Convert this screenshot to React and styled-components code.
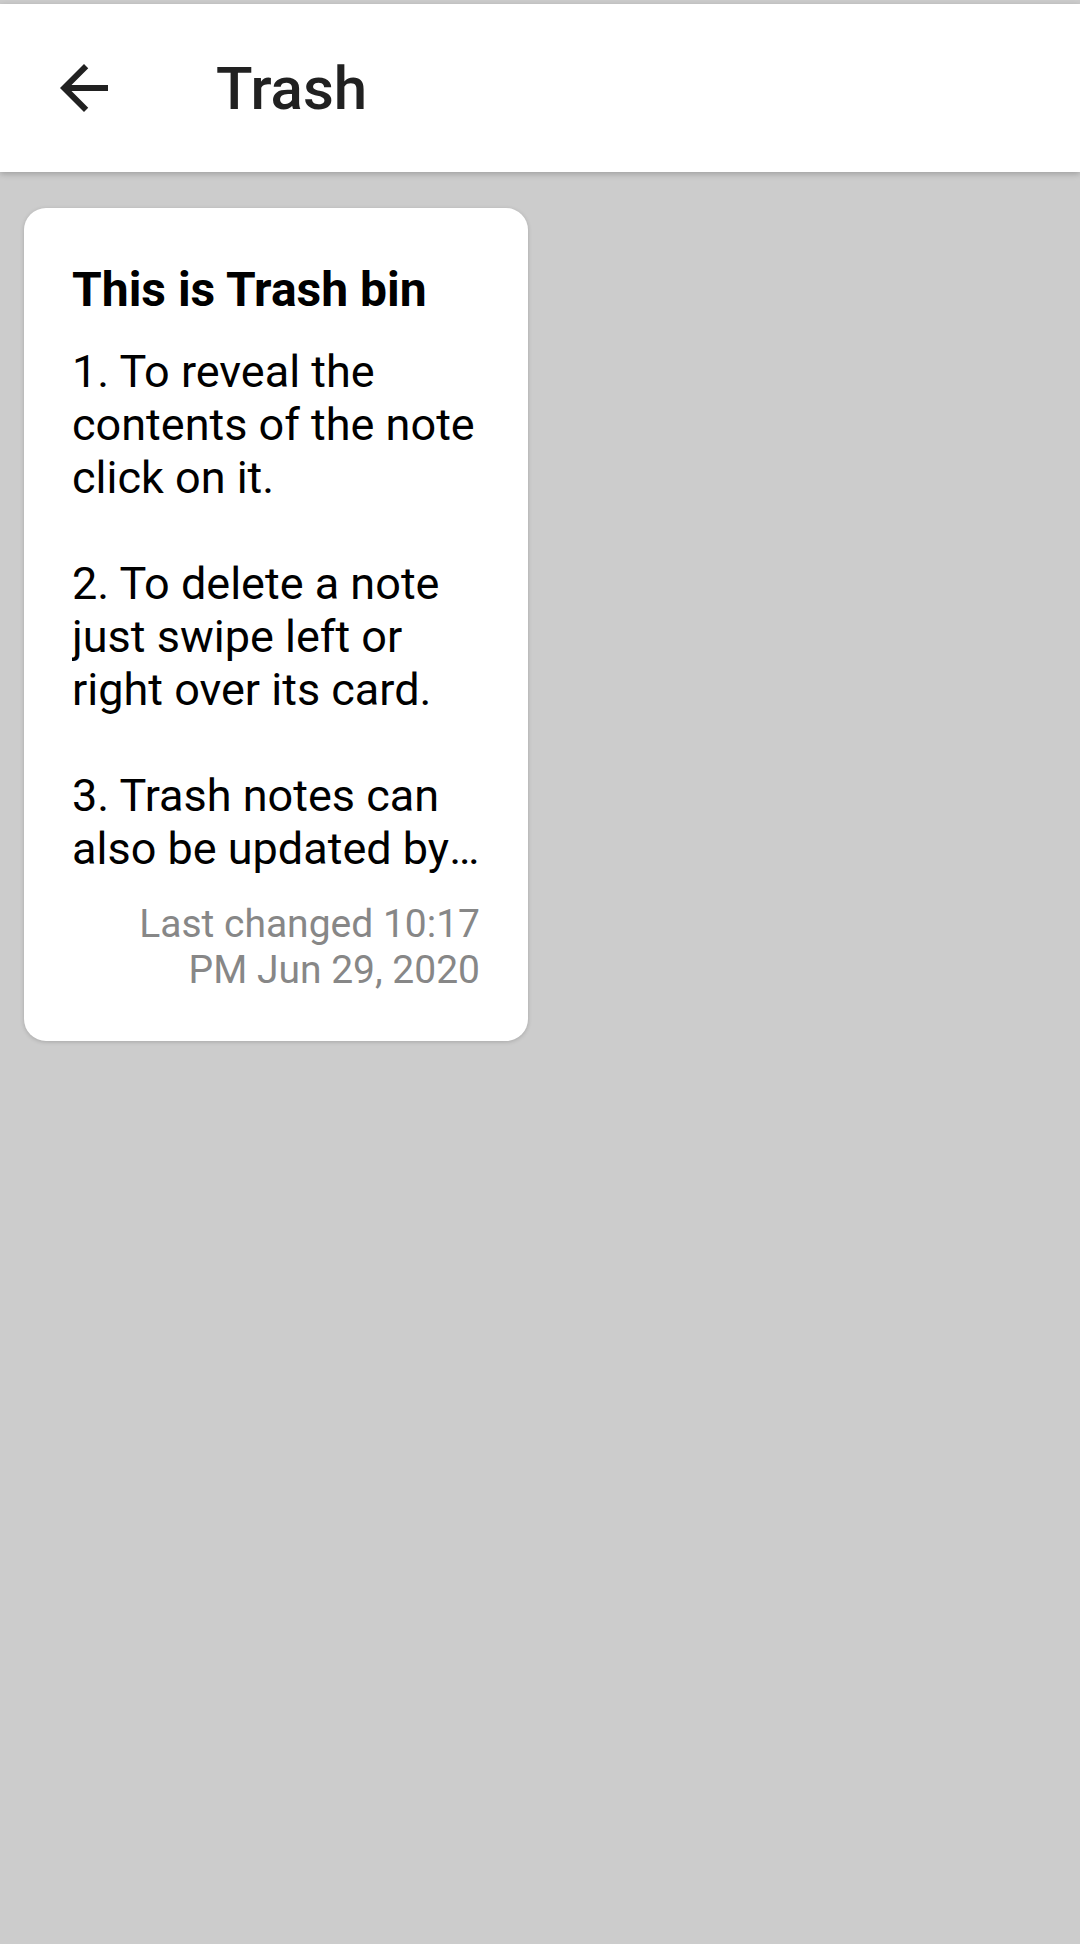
import styled, { createGlobalStyle } from "styled-components";

const GlobalStyle = createGlobalStyle`
  html, body {
    margin: 0;
    padding: 0;
    background: #cccccc;
  }
  body {
    font-family: Roboto, "Noto Sans", "Liberation Sans", sans-serif;
  }
`;

const notes = [
  {
    id: 1,
    title: "This is Trash bin",
    body:
      "1. To reveal the contents of the note click on it.\n\n2. To delete a note just swipe left or right over its card.\n\n3. Trash notes can also be updated by editing them and then restored back to your notes.",
    changed: "Last changed 10:17 PM Jun 29, 2020",
  },
];

const BackIcon = () => (
  <svg width="72" height="72" viewBox="0 0 24 24" fill="#212121">
    <path d="M20 11H7.83l5.59-5.59L12 4l-8 8 8 8 1.41-1.41L7.83 13H20v-2z" />
  </svg>
);

const App = () => {
  return (
    <>
      <GlobalStyle />
      <Page>
        <Toolbar>
          <IconButton aria-label="Back">
            <BackIcon />
          </IconButton>
          <Title>Trash</Title>
        </Toolbar>

        <NoteGrid>
          {notes.map((note) => (
            <Card key={note.id}>
              <NoteTitle>{note.title}</NoteTitle>
              <NoteBody>{note.body}</NoteBody>
              <Changed>{note.changed}</Changed>
            </Card>
          ))}
        </NoteGrid>
      </Page>
    </>
  );
};

export default App;

const Page = styled.div`
  min-height: 1944px;
  padding-top: 4px;
  box-sizing: border-box;
  background: #cccccc;
`;

const Toolbar = styled.header`
  height: 168px;
  background: #ffffff;
  display: flex;
  align-items: center;
  box-shadow: 0 2px 6px rgba(0, 0, 0, 0.22);
  position: relative;
`;

const IconButton = styled.button`
  margin-left: 48px;
  width: 72px;
  height: 72px;
  padding: 0;
  border: none;
  background: none;
  display: flex;
  align-items: center;
  justify-content: center;
`;

const Title = styled.h1`
  margin: 0 0 0 96px;
  font-size: 60px;
  font-weight: 500;
  color: #212121;
`;

const NoteGrid = styled.section`
  display: grid;
  grid-template-columns: 504px;
  padding: 36px 24px;
`;

const Card = styled.article`
  background: #ffffff;
  border-radius: 22px;
  padding: 54px 48px 48px;
  box-shadow: 0 1px 4px rgba(0, 0, 0, 0.18);
  display: flex;
  flex-direction: column;
`;

const NoteTitle = styled.h2`
  margin: 0;
  font-size: 48px;
  line-height: 56px;
  font-weight: 700;
  color: #000000;
`;

const NoteBody = styled.p`
  margin: 27px -6px 0 0;
  font-size: 45px;
  line-height: 53px;
  color: #000000;
  white-space: pre-line;
  display: -webkit-box;
  -webkit-box-orient: vertical;
  -webkit-line-clamp: 10;
  overflow: hidden;
`;

const Changed = styled.div`
  margin: 26px 0 0 auto;
  max-width: 370px;
  font-size: 39px;
  line-height: 46px;
  color: #878787;
  text-align: right;
`;
